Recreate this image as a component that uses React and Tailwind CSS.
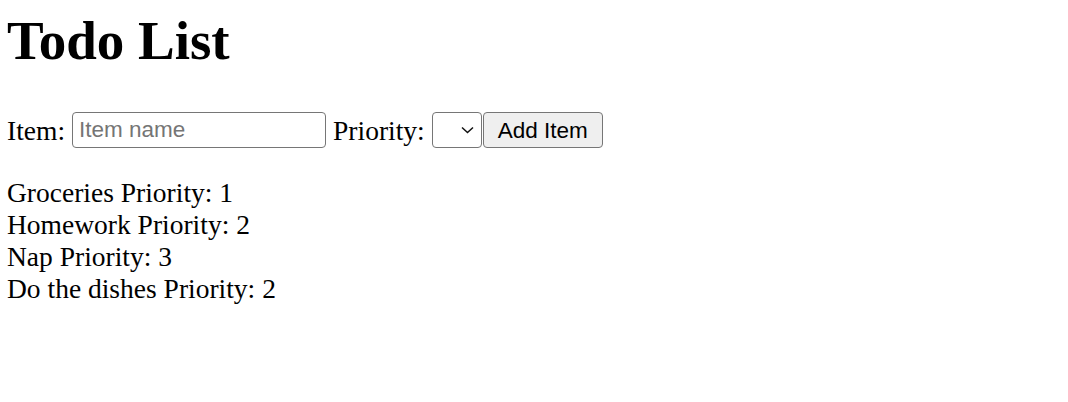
import { useState } from 'react'

const ITEMS = [
  { name: 'Groceries', priority: 1 },
  { name: 'Homework', priority: 2 },
  { name: 'Nap', priority: 3 },
  { name: 'Do the dishes', priority: 2 },
]

export default function App() {
  const [items] = useState(ITEMS)
  const [name, setName] = useState('')

  return (
    <div className="min-h-screen bg-white pl-[7px] text-black font-['Liberation_Serif','Times_New_Roman',serif]">
      <h1 className="pt-[11px] text-[55px] font-bold leading-[60px]">Todo List</h1>

      <div className="mt-[41px] flex h-[36px] items-center text-[27.5px] leading-[31px]">
        <span>Item:</span>
        <input
          value={name}
          onChange={(e) => setName(e.target.value)}
          placeholder="Item name"
          className="ml-[7px] h-[36px] w-[254px] rounded-[4px] border border-[#767676] bg-white px-[6px] font-['Liberation_Sans',Arial,sans-serif] text-[22.5px] text-black outline-none placeholder:text-[#757575]"
        />
        <span className="ml-[7px]">Priority:</span>
        <div className="relative ml-[7px] h-[36px] w-[50px]">
          <select className="h-full w-full appearance-none rounded-[4px] border border-[#767676] bg-white" />
          <svg
            className="pointer-events-none absolute left-[29px] top-[14px]"
            width="13"
            height="8"
            viewBox="0 0 13 8"
            fill="none"
          >
            <path d="M1 1.5 6.5 6.5 12 1.5" stroke="#111" strokeWidth="1.5" />
          </svg>
        </div>
        <button
          type="button"
          className="ml-[1px] h-[36px] w-[120px] rounded-[4px] border border-[#767676] bg-[#efefef] font-['Liberation_Sans',Arial,sans-serif] text-[22.5px] text-black"
        >
          Add Item
        </button>
      </div>

      <ul className="mt-[29px] text-[27.5px] leading-[32px]">
        {items.map((item, i) => (
          <li key={i}>
            {item.name} Priority: {item.priority}
          </li>
        ))}
      </ul>
    </div>
  )
}
